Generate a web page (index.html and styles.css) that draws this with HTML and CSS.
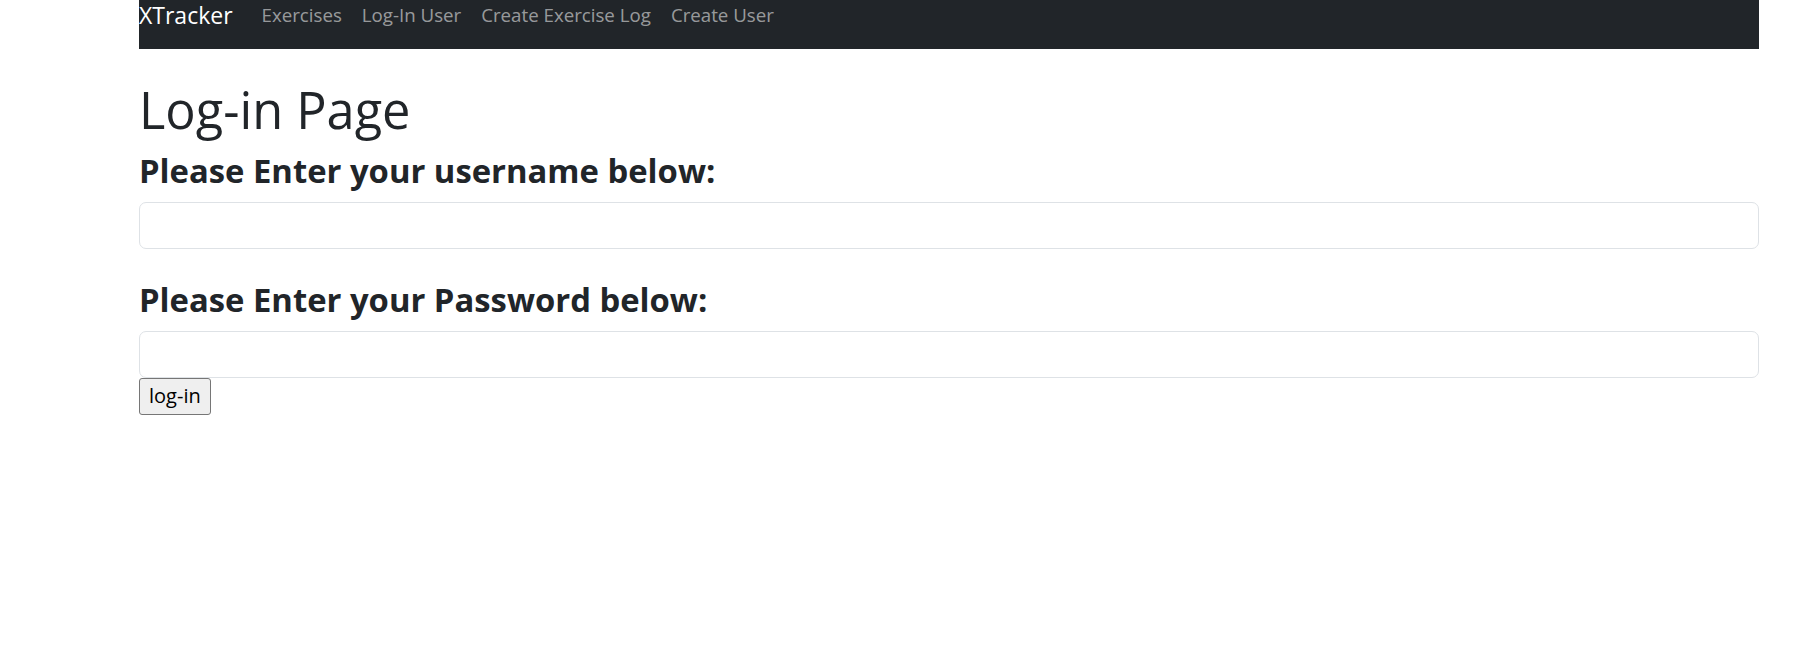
FILE: index.html
```html
<!DOCTYPE html>
<html lang="en">
<head>
<meta charset="utf-8">
<title>XTracker</title>
<link rel="stylesheet" href="styles.css">
</head>
<body>
<div class="container">
  <nav class="navbar">
    <a class="brand" href="#">XTracker</a>
    <ul class="nav-links">
      <li><a href="#">Exercises</a></li>
      <li><a href="#">Log-In User</a></li>
      <li><a href="#">Create Exercise Log</a></li>
      <li><a href="#">Create User</a></li>
    </ul>
  </nav>
  <h1 class="page-title">Log-in Page</h1>
  <form class="login-form">
    <div class="field">
      <h3 class="field-label">Please Enter your username below:</h3>
      <input class="field-input" type="text">
    </div>
    <div class="field">
      <h3 class="field-label">Please Enter your Password below:</h3>
      <input class="field-input" type="password">
    </div>
    <button class="submit-btn" type="button">log-in</button>
  </form>
</div>
</body>
</html>
```
FILE: styles.css
```css
* { box-sizing: border-box; }

html, body {
  margin: 0;
  padding: 0;
  background: #ffffff;
}

body {
  font-family: "Open Sans", "Noto Sans", sans-serif;
  font-size: 20px;
  line-height: 1.5;
  color: #212529;
}

.container {
  width: 1620px;
  margin-left: 139px;
}

.navbar {
  display: flex;
  align-items: flex-start;
  height: 49px;
  background: #212529;
}

.brand {
  font-size: 23px;
  line-height: 30px;
  color: #ffffff;
  text-decoration: none;
  margin-right: 19px;
}

.nav-links {
  display: flex;
  list-style: none;
  margin: 0;
  padding: 0;
}

.nav-links a {
  display: block;
  font-size: 18.7px;
  line-height: 30px;
  padding: 0 10px;
  color: rgba(255, 255, 255, 0.55);
  text-decoration: none;
}

.page-title {
  font-size: 50.5px;
  font-weight: 400;
  line-height: 60px;
  margin: 31px 0 11px;
}

.login-form {
  margin: 0;
}

.field {
  margin-bottom: 31px;
}

.field:last-of-type {
  margin-bottom: 0;
}

.field-label {
  font-size: 32.8px;
  font-weight: 700;
  line-height: 40px;
  margin: 0 0 11px;
}

.field-input {
  display: block;
  width: 100%;
  height: 47px;
  padding: 7px 15px;
  font: inherit;
  color: #212529;
  background: #ffffff;
  border: 1px solid #dee2e6;
  border-radius: 7px;
  outline: none;
}

.submit-btn {
  display: block;
  font-family: inherit;
  font-size: 20px;
  line-height: 30px;
  padding: 2px 9px 3px;
  color: #000000;
  background: #efefef;
  border: 1px solid #767676;
  border-radius: 3px;
}
```
